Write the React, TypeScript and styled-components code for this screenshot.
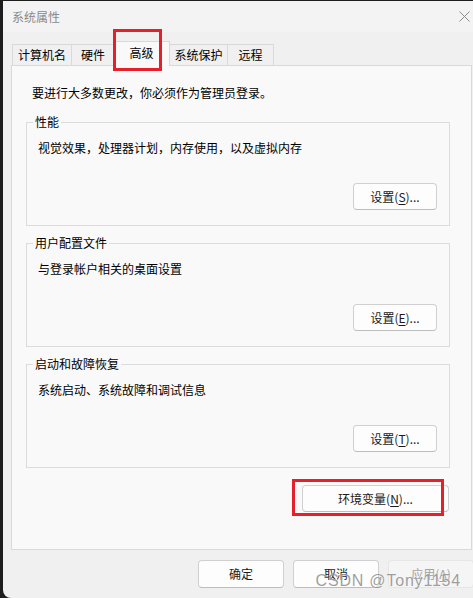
import React from 'react'
import styled, { createGlobalStyle } from 'styled-components'

const GlobalStyle = createGlobalStyle`
  html, body {
    margin: 0;
    padding: 0;
    background: #1d1d1d;
    overflow: hidden;
  }
  body {
    font-family: 'Noto Sans CJK SC', 'Noto Sans', 'Liberation Sans', sans-serif;
    font-size: 12px;
    color: #000;
  }
`

const Window = styled.div`
  position: relative;
  margin: 1px 0 0 3px;
  width: 470px;
  height: 597px;
  background: #f0f0f0;
  border-bottom-left-radius: 8px;
  display: flex;
  flex-direction: column;
  overflow: hidden;
`

const TitleBar = styled.div`
  height: 31px;
  flex: none;
  display: flex;
  align-items: center;
  justify-content: space-between;
  padding: 0 3px 0 9px;
  background: #f3f3f3;
`

const Title = styled.span`
  color: #8a8a8a;
  font-size: 12px;
  line-height: 16px;
`

const CloseIcon = styled.svg`
  width: 11px;
  height: 11px;
  stroke: #8c8c8c;
  stroke-width: 1;
`

const Body = styled.div`
  padding: 9px 1px 0 8px;
  display: flex;
  flex-direction: column;
`

const TabRow = styled.div`
  display: flex;
  align-items: flex-end;
  padding-left: 1px;
  margin-bottom: -1px;
  position: relative;
  z-index: 1;
`

const Tab = styled.div<{ $w: number; $active?: boolean; $shift?: number }>`
  position: relative;
  box-sizing: border-box;
  width: ${(p) => p.$w}px;
  height: ${(p) => (p.$active ? 25 : 21)}px;
  margin-left: ${(p) => p.$shift ?? -1}px;
  margin-bottom: ${(p) => (p.$active ? 0 : 1)}px;
  display: flex;
  align-items: center;
  justify-content: center;
  padding-bottom: ${(p) => (p.$active ? 3 : 0)}px;
  border: 1px solid #d9d9d9;
  border-bottom: none;
  background: ${(p) => (p.$active ? '#f9f9f9' : '#f0f0f0')};
  line-height: 16px;
  z-index: ${(p) => (p.$active ? 2 : 1)};
`

const Mark = styled.div`
  position: absolute;
  box-sizing: border-box;
  border: 3px solid #e5202b;
  pointer-events: none;
`

const TabMark = styled(Mark)`
  left: -1px;
  top: -13px;
  width: 49px;
  height: 42px;
`

const Panel = styled.div`
  box-sizing: border-box;
  height: 485px;
  border: 1px solid #d9d9d9;
  background: #f9f9f9;
  padding: 19px 21px 0 14px;
  display: flex;
  flex-direction: column;
`

const Intro = styled.p`
  margin: 0 0 13px 6px;
  line-height: 16px;
`

const Groups = styled.div`
  display: flex;
  flex-direction: column;
  gap: 9px;
`

const Group = styled.fieldset`
  margin: 0;
  min-width: 0;
  border: 1px solid #dcdcdc;
  padding: 0 12px 15px 11px;
  display: flex;
  flex-direction: column;
`

const Legend = styled.legend`
  padding: 0 2px;
  margin-left: -5px;
  line-height: 16px;
`

const GroupText = styled.div`
  margin-top: 10px;
  line-height: 16px;
`

const Button = styled.button<{ $w?: number; $disabled?: boolean }>`
  box-sizing: border-box;
  width: ${(p) => p.$w ?? 84}px;
  height: 27px;
  padding: 0;
  font: inherit;
  font-size: 12px;
  line-height: 16px;
  color: ${(p) => (p.$disabled ? '#a3a3a3' : '#1a1a1a')};
  background: ${(p) => (p.$disabled ? '#f5f5f5' : '#fdfdfd')};
  border: 1px solid ${(p) => (p.$disabled ? '#e6e6e6' : '#d0d0d0')};
  border-bottom-color: ${(p) => (p.$disabled ? '#e6e6e6' : '#bdbdbd')};
  border-radius: 4px;
  u {
    text-underline-offset: 2px;
  }
`

const GroupButton = styled(Button)`
  align-self: flex-end;
  margin-top: 27px;
`

const EnvWrap = styled.div`
  position: relative;
  align-self: flex-end;
  margin: 17px 1px 0 0;
`

const EnvMark = styled(Mark)`
  left: -10px;
  top: -6px;
  width: 152px;
  height: 37px;
`

const Footer = styled.div`
  display: flex;
  justify-content: flex-end;
  gap: 9px;
  margin: 10px -2px 0 0;
`

const FooterButton = styled(Button)`
  height: 28px;
`

const Watermark = styled.div`
  position: absolute;
  right: 12px;
  bottom: 8px;
  font-family: 'Liberation Sans', Arial, sans-serif;
  font-size: 16px;
  line-height: 18px;
  letter-spacing: 0.8px;
  color: rgba(115, 115, 115, 0.7);
  text-shadow: 0 0 1px rgba(255, 255, 255, 0.9);
  pointer-events: none;
`

const groups = [
  { title: '性能', text: '视觉效果，处理器计划，内存使用，以及虚拟内存', key: 'S' },
  { title: '用户配置文件', text: '与登录帐户相关的桌面设置', key: 'E' },
  { title: '启动和故障恢复', text: '系统启动、系统故障和调试信息', key: 'T' },
]

export default function App() {
  return (
    <>
      <GlobalStyle />
      <Window>
        <TitleBar>
          <Title>系统属性</Title>
          <CloseIcon viewBox="0 0 11 11">
            <line x1="0.5" y1="0.5" x2="10.5" y2="10.5" />
            <line x1="10.5" y1="0.5" x2="0.5" y2="10.5" />
          </CloseIcon>
        </TitleBar>
        <Body>
          <TabRow>
            <Tab $w={60} $shift={0}>计算机名</Tab>
            <Tab $w={44}>硬件</Tab>
            <Tab $w={57} $active $shift={-2}>
              高级
              <TabMark />
            </Tab>
            <Tab $w={59}>系统保护</Tab>
            <Tab $w={47}>远程</Tab>
          </TabRow>
          <Panel>
            <Intro>要进行大多数更改，你必须作为管理员登录。</Intro>
            <Groups>
              {groups.map((g) => (
                <Group key={g.key}>
                  <Legend>{g.title}</Legend>
                  <GroupText>{g.text}</GroupText>
                  <GroupButton>
                    设置(<u>{g.key}</u>)...
                  </GroupButton>
                </Group>
              ))}
            </Groups>
            <EnvWrap>
              <Button $w={147}>
                环境变量(<u>N</u>)...
              </Button>
              <EnvMark />
            </EnvWrap>
          </Panel>
          <Footer>
            <FooterButton $w={86}>确定</FooterButton>
            <FooterButton $w={86}>取消</FooterButton>
            <FooterButton $w={86} $disabled>
              应用(<u>A</u>)
            </FooterButton>
          </Footer>
        </Body>
        <Watermark>CSDN @Tony1154</Watermark>
      </Window>
    </>
  )
}
